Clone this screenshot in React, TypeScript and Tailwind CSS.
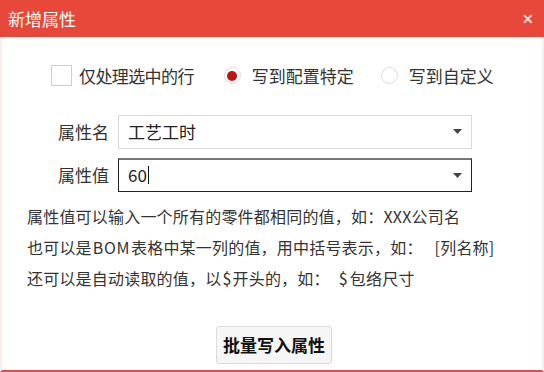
import { useState } from "react";

const font = { fontFamily: '"Noto Sans CJK SC", "Microsoft YaHei", sans-serif' };

const Caret = () => (
  <svg width="9" height="5" viewBox="0 0 9 5" className="text-[#444]">
    <path d="M0 0h9L4.5 5z" fill="currentColor" />
  </svg>
);

const Field = ({ label, value, active }: { label: string; value: string; active?: boolean }) => (
  <div className="flex items-center">
    <span className="w-[60px] text-right text-[17px] text-[#333] pr-[11px] whitespace-nowrap">{label}</span>
    <div
      className={
        "flex h-[34px] w-[354px] items-center justify-between pl-[9px] pr-[9px] " +
        (active ? "border border-[#222] border-t-[2px] border-t-[#777]" : "border border-[#d9d9d9]")
      }
    >
      <span className="flex items-center text-[17px] text-[#222]">
        {value}
        {active && <span className="ml-[1px] inline-block h-[18px] w-px bg-[#111]" />}
      </span>
      <Caret />
    </div>
  </div>
);

const Radio = ({ checked, label, onClick, className }: { checked: boolean; label: string; onClick: () => void; className: string }) => (
  <button onClick={onClick} className={"flex items-center " + className}>
    <span className="flex h-[17px] w-[17px] items-center justify-center rounded-full border border-[#ddd] bg-white">
      {checked && <span className="h-[10px] w-[10px] rounded-full bg-[#c0160e]" />}
    </span>
    <span className="ml-[11px] text-[17px] text-[#333]">{label}</span>
  </button>
);

export default function App() {
  const [mode, setMode] = useState("config");
  return (
    <div style={font} className="flex h-[372px] w-[544px] flex-col bg-white">
      <div className="flex h-[37px] items-center justify-between bg-[#e8483a] pl-[8px] pr-[10px]">
        <span className="text-[17px] text-white">新增属性</span>
        <span className="text-[14px] font-bold text-[#fcd9d3]">✕</span>
      </div>
      <div className="flex flex-1 flex-col border-x-[2px] border-b-[2px] border-x-[#fbeeec] border-b-[#d9534a]">
        <div className="flex items-center pl-[49px] pt-[26px]">
          <span className="h-[21px] w-[21px] border border-[#cfcfcf] bg-white" />
          <span className="ml-[7px] text-[17px] tracking-[-0.6px] text-[#333]">仅处理选中的行</span>
          <Radio checked={mode === "config"} label="写到配置特定" onClick={() => setMode("config")} className="ml-[30px]" />
          <Radio checked={mode === "custom"} label="写到自定义" onClick={() => setMode("custom")} className="ml-[27px]" />
        </div>
        <div className="mt-[26px] flex flex-col gap-[9px] pl-[56px]">
          <Field label="属性名" value="工艺工时" />
          <Field label="属性值" value="60" active />
        </div>
        <div className="mt-[9px] flex flex-col pl-[25px] text-[16px] leading-[31px] tracking-[0.2px] text-[#333]">
          <span>属性值可以输入一个所有的零件都相同的值，如：XXX公司名</span>
          <span>
            也可以是<span className="px-[1px] tracking-[0.6px]">BOM</span>表格中某一列的值，用中括号表示，如：
            <span className="ml-[12px]">[列名称]</span>
          </span>
          <span>
            还可以是自动读取的值，以<span className="px-[1px]">$</span>开头的，如：
            <span className="ml-[9px] pr-[2px]">$</span>包络尺寸
          </span>
        </div>
        <div className="mt-[32px] flex justify-center pl-[4px]">
          <button className="h-[38px] w-[116px] rounded-[3px] border border-[#dcdcdc] bg-[#f6f6f6] text-[17px] font-bold text-[#111]">
            批量写入属性
          </button>
        </div>
      </div>
    </div>
  );
}
